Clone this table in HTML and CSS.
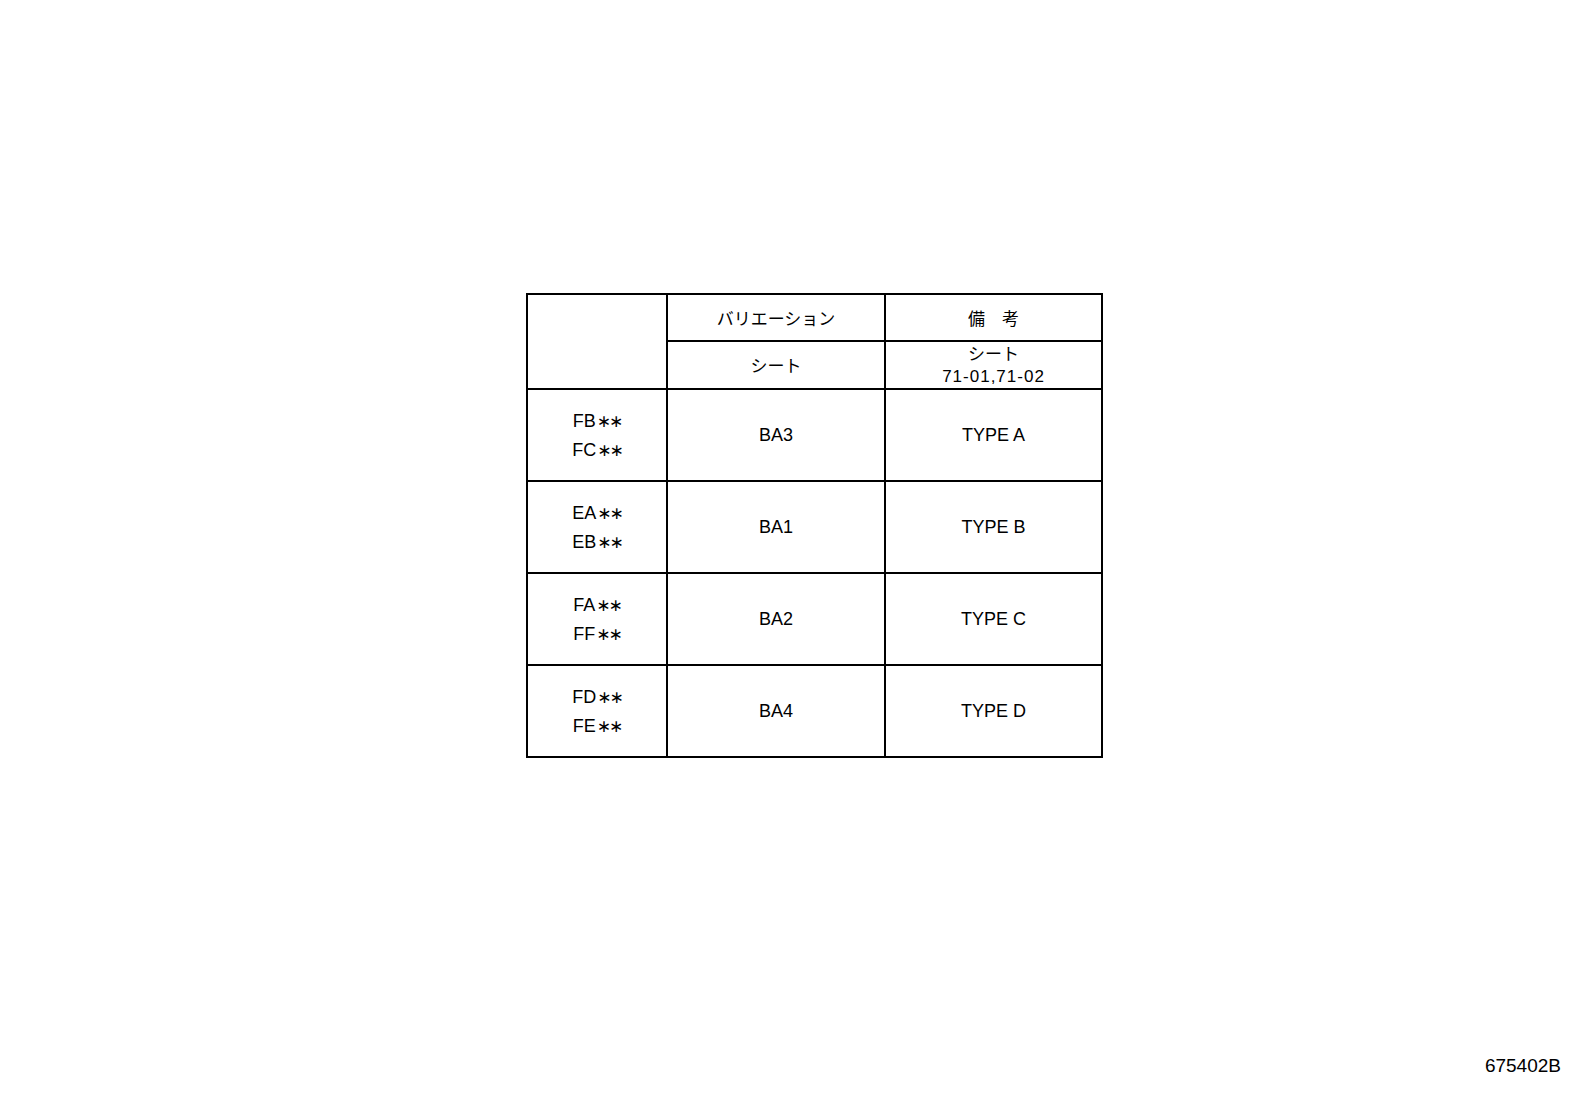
FILE: index.html
```html
<!DOCTYPE html>
<html>
<head>
<meta charset="utf-8">
<link rel="stylesheet" href="styles.css">
</head>
<body>
<div class="page">
  <table class="grid">
    <colgroup>
      <col class="c1"><col class="c2"><col class="c3">
    </colgroup>
    <tr class="h1">
      <td rowspan="2"></td>
      <td class="jp">バリエーション</td>
      <td class="jp">備　考</td>
    </tr>
    <tr class="h2">
      <td class="jp">シート</td>
      <td class="two"><span class="jp">シート</span><br><span class="num">71-01,71-02</span></td>
    </tr>
    <tr class="row">
      <td class="pair">FB<span class="ast">∗∗</span><br>FC<span class="ast">∗∗</span></td>
      <td>BA3</td>
      <td>TYPE A</td>
    </tr>
    <tr class="row">
      <td class="pair">EA<span class="ast">∗∗</span><br>EB<span class="ast">∗∗</span></td>
      <td>BA1</td>
      <td>TYPE B</td>
    </tr>
    <tr class="row">
      <td class="pair">FA<span class="ast">∗∗</span><br>FF<span class="ast">∗∗</span></td>
      <td>BA2</td>
      <td>TYPE C</td>
    </tr>
    <tr class="row">
      <td class="pair">FD<span class="ast">∗∗</span><br>FE<span class="ast">∗∗</span></td>
      <td>BA4</td>
      <td>TYPE D</td>
    </tr>
  </table>
  <div class="code">675402B</div>
</div>
</body>
</html>
```
FILE: styles.css
```css
html, body {
  margin: 0;
  padding: 0;
  background: #fff;
}
.page {
  width: 1592px;
  height: 1099px;
  box-sizing: border-box;
  padding: 293px 0 0 526px;
  display: flex;
  flex-direction: column;
  font-family: "Liberation Sans", Arial, "Noto Sans CJK JP", sans-serif;
  color: #000;
}
.grid {
  border-collapse: collapse;
  table-layout: fixed;
  width: 577px;
}
.c1 { width: 140px; }
.c2 { width: 218px; }
.c3 { width: 217px; }
.grid td {
  border: 2px solid #000;
  padding: 0;
  text-align: center;
  vertical-align: middle;
  font-size: 18px;
  line-height: 22px;
}
.grid td.jp, .jp {
  font-family: "Noto Sans CJK JP", sans-serif;
  font-size: 17px;
}
.h1 td { height: 45px; }
.h2 td { height: 43px; }
.h2 td.two { line-height: 22px; padding-top: 0; }
.num { font-size: 17px; letter-spacing: 1px; }
.row td { height: 88px; }
.row td.pair { line-height: 29px; padding-top: 2px; }
.ast {
  font-family: "DejaVu Sans", sans-serif;
  font-size: 17px;
  letter-spacing: -2px;
  margin-left: 1px;
}
.code {
  margin-top: auto;
  align-self: flex-end;
  margin-right: 31px;
  margin-bottom: 22px;
  font-size: 19px;
  line-height: 22px;
}
```
